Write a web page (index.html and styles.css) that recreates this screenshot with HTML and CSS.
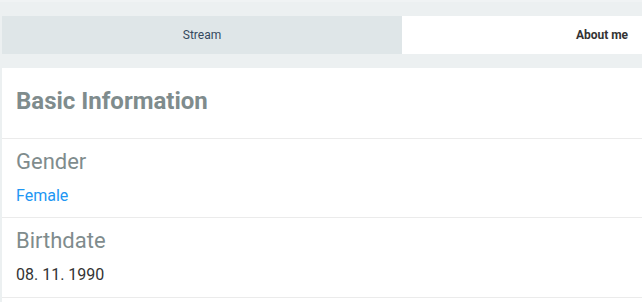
FILE: index.html
```html
<!DOCTYPE html>
<html lang="en">
<head>
    <meta charset="UTF-8">
    <meta name="viewport" content="width=device-width, initial-scale=1.0">
    <title>Profile - About me</title>
    <link rel="stylesheet" href="styles.css">
</head>
<body>

<div class="page">
    <!-- Tabs -->
    <div class="tabs">
        <div class="tab">Stream</div>
        <div class="tab active">About me</div>
    </div>

    <!-- Basic Information Card -->
    <div class="card">
        <div class="card-header">
            <h2>Basic Information</h2>
        </div>
        <div class="info-row">
            <h3>Gender</h3>
            <a class="info-link" href="#">Female</a>
        </div>
        <div class="info-row">
            <h3>Birthdate</h3>
            <p>08. 11. 1990</p>
        </div>
    </div>
</div>

</body>
</html>
```

FILE: styles.css
```css
* {
    margin: 0;
    padding: 0;
    box-sizing: border-box;
    font-family: Roboto, "Liberation Sans", sans-serif;
}

html, body {
    overflow: hidden;
}

body {
    background: #ecf0f1;
    border-top: 2px solid #f0f3f4;
}

.page {
    width: 802px;
    padding: 14px 0 0 2px;
}

/* Tabs */
.tabs {
    display: flex;
    margin-bottom: 14px;
}

.tab {
    flex: 1;
    height: 38px;
    line-height: 38px;
    text-align: center;
    font-size: 12px;
    color: #34495e;
    background: #dfe6e8;
}

.tab.active {
    background: #fff;
    font-weight: bold;
    color: #333;
}

/* Card */
.card {
    background: #fff;
    padding-bottom: 40px;
}

.card-header {
    height: 71px;
    padding: 19px 14px 0;
    border-bottom: 1px solid #ebebeb;
}

h2 {
    font-size: 24px;
    font-weight: bold;
    color: #7f8c8d;
    line-height: 28px;
}

.info-row {
    height: 79px;
    padding: 10px 14px 0;
    border-bottom: 1px solid #ebebeb;
}

.info-row:last-child {
    height: 80px;
}

h3 {
    font-size: 22px;
    font-weight: normal;
    color: #7f8c8d;
    line-height: 26px;
    margin-bottom: 11px;
}

.info-link {
    display: block;
    font-size: 16px;
    color: #2196f3;
    text-decoration: none;
    line-height: 20px;
}

.info-row p {
    font-size: 16px;
    color: #333;
    line-height: 20px;
}
```
